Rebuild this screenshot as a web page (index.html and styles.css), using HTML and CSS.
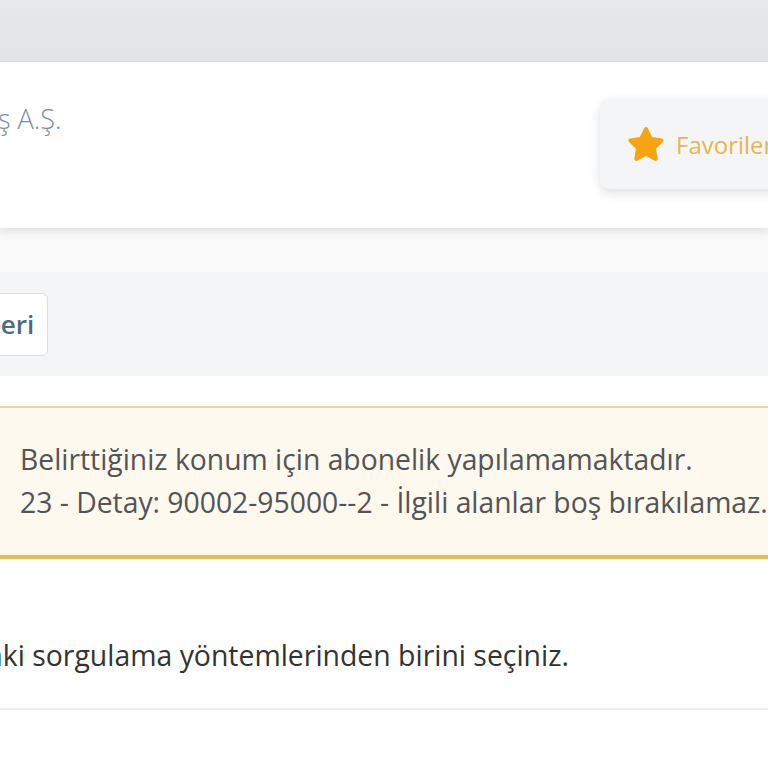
FILE: index.html
```html
<!DOCTYPE html>
<html lang="tr">
<head>
<meta charset="utf-8">
<title>Abonelik</title>
<link rel="stylesheet" href="styles.css">
</head>
<body>
<div class="page">
  <div class="topbar"></div>
  <header class="header">
    <div class="brand">ş A.Ş.</div>
    <button class="fav" type="button">
      <svg class="star" viewBox="0 0 576 512" aria-hidden="true"><path d="M259.3 17.8L194 150.2 47.9 171.5c-26.2 3.8-36.7 36.1-17.7 54.6l105.7 103-25 145.5c-4.5 26.3 23.2 46 46.4 33.7L288 439.6l130.7 68.7c23.2 12.2 50.9-7.4 46.4-33.7l-25-145.5 105.7-103c19-18.5 8.5-50.8-17.7-54.6L382 150.2 316.7 17.8c-11.7-23.6-45.6-23.9-57.4 0z"/></svg>
      <span>Favorilerim</span>
    </button>
  </header>
  <div class="spacer"></div>
  <nav class="toolbar">
    <button class="back" type="button">Geri</button>
  </nav>
  <div class="alert">
    <p>Belirttiğiniz konum için abonelik yapılamamaktadır.<br>23 - Detay: 90002-95000--2 - İlgili alanlar boş bırakılamaz.</p>
  </div>
  <section class="query">
    <p class="lead">aki sorgulama yöntemlerinden birini seçiniz.</p>
  </section>
</div>
</body>
</html>
```
FILE: styles.css
```css
html, body {
  margin: 0;
  padding: 0;
  background: #ffffff;
}
body {
  font-family: "Open Sans", "Noto Sans", sans-serif;
  overflow: hidden;
}
.page {
  width: 768px;
  overflow: hidden;
}
.topbar {
  height: 61px;
  background: linear-gradient(#e6e9ec, #e2e5e8);
  border-bottom: 1px solid #dde1e5;
}
.header {
  height: 166px;
  background: #ffffff;
  display: flex;
  justify-content: space-between;
  align-items: center;
  box-shadow: 0 3px 8px rgba(0, 0, 0, 0.07);
  position: relative;
  z-index: 1;
}
.brand {
  align-self: flex-start;
  margin-top: 38px;
  margin-left: -2px;
  font-size: 27px;
  font-weight: 300;
  color: #7f8d9b;
  white-space: nowrap;
}
.fav {
  flex: none;
  display: flex;
  align-items: center;
  gap: 11px;
  width: 250px;
  height: 90px;
  margin-right: -82px;
  margin-top: -2px;
  padding: 0 0 0 27px;
  border: 0;
  border-radius: 9px;
  background: #f4f5f7;
  box-shadow: 0 4px 12px rgba(0, 0, 0, 0.13);
  font-family: inherit;
  font-size: 24px;
  color: #e8b64e;
  white-space: nowrap;
}
.star {
  flex: none;
  width: 38px;
  height: 34px;
  fill: #f5a511;
}
.spacer {
  height: 44px;
  background: linear-gradient(#f3f3f3, #fafafa 30%, #fbfbfb);
}
.toolbar {
  height: 104px;
  background: #f4f5f7;
  display: flex;
  align-items: center;
}
.back {
  margin-left: -32px;
  height: 63px;
  padding: 0 13px;
  background: #ffffff;
  border: 1px solid #d9dee4;
  border-radius: 6px;
  font-family: inherit;
  font-size: 26px;
  font-weight: 600;
  color: #4b6a86;
}
.alert {
  margin-top: 30px;
  background: #fdf9ef;
  border-top: 2px solid #e3d8a6;
  border-bottom: 4px solid #e8bb5a;
  padding: 30px 20px 31px;
}
.alert p {
  margin: 0;
  font-size: 28.3px;
  line-height: 43px;
  color: #545454;
  white-space: nowrap;
}
.query {
  padding-top: 77px;
  border-bottom: 2px solid #eeeeee;
}
.lead {
  margin: 0 0 0 -13px;
  height: 72px;
  font-size: 28.4px;
  line-height: 38px;
  color: #333333;
  white-space: nowrap;
}
```
